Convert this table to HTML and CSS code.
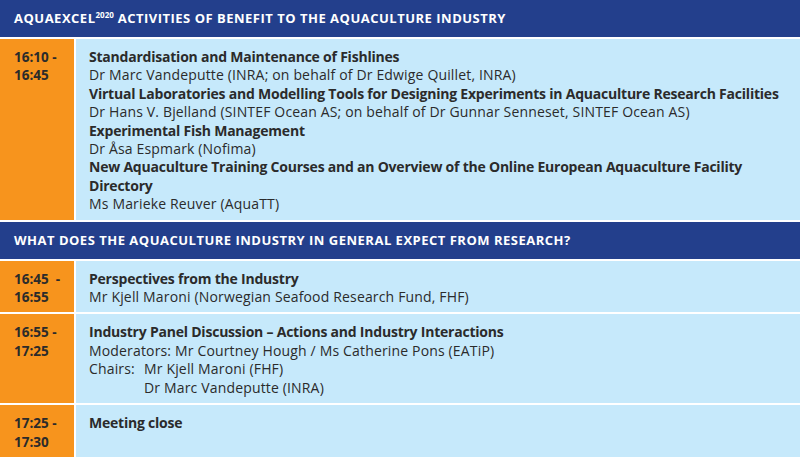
FILE: index.html
```html
<!DOCTYPE html>
<html>
<head>
<meta charset="utf-8">
<link rel="stylesheet" href="styles.css">
</head>
<body>
<div class="agenda">
  <div class="section-head">AQUAEXCEL<sup class="sup">2020</sup> ACTIVITIES OF BENEFIT TO THE AQUACULTURE INDUSTRY</div>

  <div class="time">16:10 -<br>16:45</div>
  <div class="content">
    <div class="title">Standardisation and Maintenance of Fishlines</div>
    <div class="line">Dr Marc Vandeputte (INRA; on behalf of Dr Edwige Quillet, INRA)</div>
    <div class="title">Virtual Laboratories and Modelling Tools for Designing Experiments in Aquaculture Research Facilities</div>
    <div class="line">Dr Hans V. Bjelland (SINTEF Ocean AS; on behalf of Dr Gunnar Senneset, SINTEF Ocean AS)</div>
    <div class="title">Experimental Fish Management</div>
    <div class="line">Dr Åsa Espmark (Nofima)</div>
    <div class="title">New Aquaculture Training Courses and an Overview of the Online European Aquaculture Facility<br>Directory</div>
    <div class="line">Ms Marieke Reuver (AquaTT)</div>
  </div>

  <div class="section-head">WHAT DOES THE AQUACULTURE INDUSTRY IN GENERAL EXPECT FROM RESEARCH?</div>

  <div class="time">16:45&nbsp; -<br>16:55</div>
  <div class="content">
    <div class="title">Perspectives from the Industry</div>
    <div class="line">Mr Kjell Maroni (Norwegian Seafood Research Fund, FHF)</div>
  </div>

  <div class="time">16:55 -<br>17:25</div>
  <div class="content">
    <div class="title">Industry Panel Discussion – Actions and Industry Interactions</div>
    <div class="line">Moderators: Mr Courtney Hough / Ms Catherine Pons (EATiP)</div>
    <div class="chairs">
      <div class="chairs-label">Chairs:</div>
      <div class="chairs-names">
        <div class="line">Mr Kjell Maroni (FHF)</div>
        <div class="line">Dr Marc Vandeputte (INRA)</div>
      </div>
    </div>
  </div>

  <div class="time last">17:25 -<br>17:30</div>
  <div class="content last">
    <div class="title">Meeting close</div>
  </div>
</div>
</body>
</html>
```

FILE: styles.css
```css
html, body {
  margin: 0;
  padding: 0;
  background: #ffffff;
}
body {
  font-family: "Open Sans", "Liberation Sans", sans-serif;
  color: #2b2b2b;
  width: 803px;
  height: 457px;
  overflow: hidden;
}
.agenda {
  width: 800px;
  display: grid;
  grid-template-columns: 74px 724px;
  column-gap: 2px;
  row-gap: 2px;
}
.section-head {
  grid-column: 1 / 3;
  background: #233f8c;
  color: #ffffff;
  font-weight: 700;
  font-size: 13px;
  height: 37px;
  line-height: 37px;
  padding-left: 14px;
  letter-spacing: 0.5px;
}
.sup {
  font-size: 8px;
  vertical-align: 5px;
  line-height: 0;
  letter-spacing: 0;
}
.time {
  background: #f7941d;
  font-weight: 700;
  font-size: 13.5px;
  line-height: 18.4px;
  padding: 9px 0 6px 14px;
}
.content {
  background: #c6e9fb;
  font-size: 14px;
  line-height: 18.4px;
  letter-spacing: 0.16px;
  padding: 9px 6px 6px 13px;
}
.time.last,
.content.last {
  height: 37px;
}
.title {
  font-weight: 700;
  letter-spacing: -0.22px;
}
.chairs {
  display: flex;
}
.chairs-label {
  width: 55px;
}
```
